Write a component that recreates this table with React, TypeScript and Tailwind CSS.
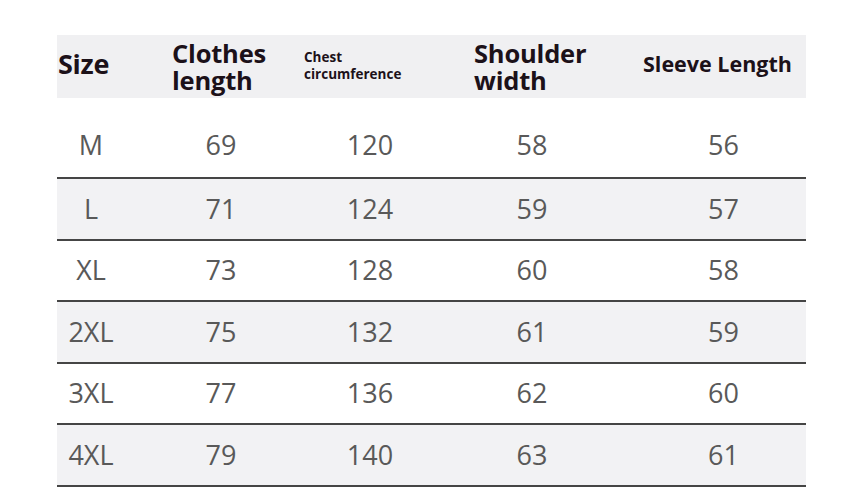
const rows = [
  ["L", "71", "124", "59", "57"],
  ["XL", "73", "128", "60", "58"],
  ["2XL", "75", "132", "61", "59"],
  ["3XL", "77", "136", "62", "60"],
  ["4XL", "79", "140", "63", "61"],
];

const colW = ["w-[68px]", "w-[192px]", "w-[106px]", "w-[218px]", "w-[165px]"];

function Cells({ values }: { values: string[] }) {
  return (
    <>
      {values.map((v, i) => (
        <div key={i} className={`${colW[i]} flex justify-center`}>
          {v}
        </div>
      ))}
    </>
  );
}

export default function App() {
  return (
    <div
      className="w-[856px] h-[490px] bg-white pt-[35px] pl-[57px] overflow-hidden"
      style={{ fontFamily: '"Open Sans", "Noto Sans", sans-serif' }}
    >
      <div className="w-[749px]">
        {/* Header */}
        <div className="flex h-[63px] items-center bg-[#f0f0f2] text-[#1c1119] font-bold">
          <div className="w-[115px] pl-[1px] pb-[6px] text-[27px] leading-none tracking-[-0.3px]">Size</div>
          <div className="w-[132px] pb-[2px] tracking-[-0.2px] text-[25.5px]">
            <div className="leading-[28px]">Clothes</div>
            <div className="leading-[26px]">length</div>
          </div>
          <div className="w-[170px] text-[13.5px] leading-[17px] pb-[2px]">
            <div>Chest</div>
            <div>circumference</div>
          </div>
          <div className="w-[169px] pb-[2px] tracking-[-0.2px] text-[25.5px]">
            <div className="leading-[28px]">Shoulder</div>
            <div className="leading-[26px]">width</div>
          </div>
          <div className="w-[163px] pb-[6px] text-[21.5px] leading-none">Sleeve Length</div>
        </div>

        {/* Body */}
        <div className="text-[27px] text-[#595959]">
          <div className="flex h-[79px] items-center pt-[16px] bg-white">
            <Cells values={["M", "69", "120", "58", "56"]} />
          </div>
          {rows.map((r, i) => (
            <div
              key={r[0]}
              className={`flex h-[61.6px] items-center border-t-2 border-[#454545] ${
                i % 2 === 0 ? "bg-[#f2f2f4]" : "bg-white"
              }`}
            >
              <Cells values={r} />
            </div>
          ))}
          <div className="border-t-2 border-[#454545]" />
        </div>
      </div>
    </div>
  );
}
